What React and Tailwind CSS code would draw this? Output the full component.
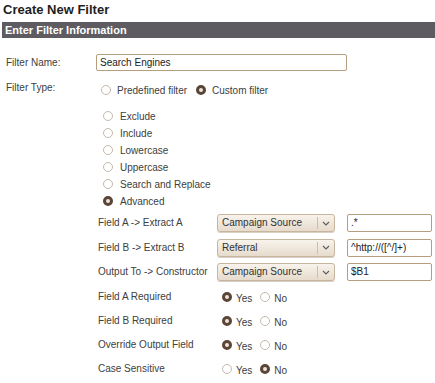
import React from 'react'

const options = ['Exclude', 'Include', 'Lowercase', 'Uppercase', 'Search and Replace', 'Advanced']

const fields = [
  { label: 'Field A -> Extract A', select: 'Campaign Source', value: '.*' },
  { label: 'Field B -> Extract B', select: 'Referral', value: '^http://([^/]+)' },
  { label: 'Output To -> Constructor', select: 'Campaign Source', value: '$B1' },
]

const flags = [
  { label: 'Field A Required', yes: true },
  { label: 'Field B Required', yes: true },
  { label: 'Override Output Field', yes: true },
  { label: 'Case Sensitive', yes: false },
]

function Radio({ checked }) {
  return checked ? (
    <span className="box-border block h-[10px] w-[10px] shrink-0 rounded-full border-[3px] border-[#5a4536] bg-[#eee6dd]" />
  ) : (
    <span className="box-border block h-[10px] w-[10px] shrink-0 rounded-full border border-[#c4b9ae] bg-white" />
  )
}

function Select({ value }) {
  return (
    <div className="box-border flex h-[18px] w-[118px] items-center rounded-[3px] border border-[#c7b59e] bg-gradient-to-b from-[#f8f3ec] to-[#e6dbcc] shadow-[0_1px_0_#d8cfc4]">
      <span className="flex-1 pl-[4px] text-[#333]">{value}</span>
      <span className="h-[12px] w-px bg-[#cbbda9]" />
      <span className="flex w-[16px] justify-center">
        <svg width="8" height="5" viewBox="0 0 8 5" fill="none">
          <path d="M1 1l3 3 3-3" stroke="#5c5c5c" strokeWidth="1.1" />
        </svg>
      </span>
    </div>
  )
}

export default function App() {
  return (
    <div className="h-[383px] w-[435px] overflow-hidden bg-white font-['Liberation_Sans',Arial,sans-serif] text-[10px] leading-[12px] text-[#404040]">
      <h1 className="pl-[3px] pt-[2px] text-[13px] font-bold leading-[16px] text-[#1e1e1e]">Create New Filter</h1>
      <div className="ml-[2px] mt-[4px] h-[16px] bg-[#5e5c61] pl-[3px] text-[11px] font-bold leading-[16px] text-white">
        Enter Filter Information
      </div>

      <div className="pl-[6px] pt-[16px]">
        {/* Filter name */}
        <div className="flex h-[17px] items-center">
          <span className="w-[90px]">Filter Name:</span>
          <div className="box-border flex h-[17px] w-[251px] items-center rounded-[2px] border border-[#b59d80] pl-[3px] text-[#222]">
            Search Engines
          </div>
        </div>

        {/* Filter type */}
        <div className="mt-[8px] flex h-[17px] items-center">
          <span className="w-[90px]">Filter Type:</span>
          <span className="ml-[5px] translate-y-[2px]"><Radio /></span>
          <span className="ml-[6px] pt-[6px]">Predefined filter</span>
          <span className="ml-[9px] translate-y-[2px]"><Radio checked /></span>
          <span className="ml-[6px] pt-[6px]">Custom filter</span>
        </div>

        {/* Custom options */}
        <div className="mt-[11px] pl-[97px]">
          {options.map((o) => (
            <div key={o} className="flex h-[17px] items-center">
              <Radio checked={o === 'Advanced'} />
              <span className="ml-[7px] pt-[2px]">{o}</span>
            </div>
          ))}
        </div>

        {/* Advanced fields */}
        <div className="pl-[92px] pt-[5px]">
          {fields.map((f, i) => (
            <div key={f.label} className={`flex h-[18px] items-center ${i ? 'mt-[6.5px]' : ''}`}>
              <span className="w-[119px]">{f.label}</span>
              <Select value={f.select} />
              <div className="ml-[12px] box-border flex h-[18px] w-[85px] items-center rounded-[2px] border border-[#b59d80] pl-[3px] text-[#222]">
                {f.value}
              </div>
            </div>
          ))}

          {flags.map((f, i) => (
            <div key={f.label} className={`flex h-[18px] items-center ${i ? 'mt-[6px]' : 'mt-[6.5px]'}`}>
              <span className="w-[119px]">{f.label}</span>
              <span className="ml-[5px]"><Radio checked={f.yes} /></span>
              <span className="ml-[4px] pt-[5px]">Yes</span>
              <span className="ml-[8px]"><Radio checked={!f.yes} /></span>
              <span className="ml-[4px] pt-[5px]">No</span>
            </div>
          ))}
        </div>
      </div>
    </div>
  )
}
